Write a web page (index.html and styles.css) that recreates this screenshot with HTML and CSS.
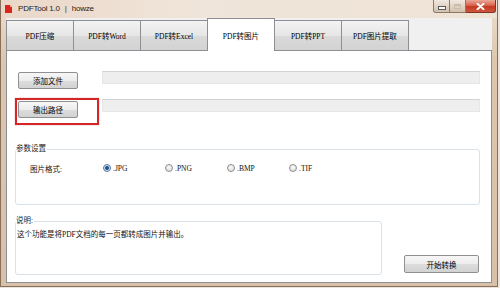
FILE: index.html
```html
<!DOCTYPE html>
<html lang="zh-CN">
<head>
<meta charset="utf-8">
<title>PDFTool 1.0 | howze</title>
<link rel="stylesheet" href="styles.css">
</head>
<body>
<div class="window">
  <div class="titlebar">
    <svg class="app-icon" width="7" height="8" viewBox="0 0 7 8"><path d="M0 0H5L7 2V8H0Z" fill="#d8261c"/><path d="M5 0V2H7Z" fill="#f4b5ab"/></svg>
    <span class="title">PDFTool 1.0<span class="sep">|</span>howze</span>
    <div class="controls">
      <div class="ctl min"><span class="min-bar"></span></div>
      <div class="ctl max"><span class="max-box"></span></div>
      <div class="ctl close"><svg width="9" height="7" viewBox="0 0 9 7"><path d="M1.5 0.8L7.5 6.2M7.5 0.8L1.5 6.2" stroke="#fff" stroke-width="2" stroke-linecap="round"/></svg></div>
    </div>
  </div>
  <div class="client">
    <div class="tabs">
      <div class="tab">PDF压缩</div>
      <div class="tab">PDF转Word</div>
      <div class="tab">PDF转Excel</div>
      <div class="tab active">PDF转图片</div>
      <div class="tab">PDF转PPT</div>
      <div class="tab">PDF图片提取</div>
    </div>
    <div class="page">
      <div class="file-row">
        <button class="btn">添加文件</button>
        <div class="field"></div>
      </div>
      <div class="file-row second">
        <button class="btn">输出路径</button>
        <div class="field"></div>
        <div class="highlight"></div>
      </div>
      <fieldset class="group params">
        <legend>参数设置</legend>
        <div class="param-row">
          <span class="param-label">图片格式:</span>
          <span class="option"><span class="radio checked"></span>.JPG</span>
          <span class="option"><span class="radio"></span>.PNG</span>
          <span class="option"><span class="radio"></span>.BMP</span>
          <span class="option"><span class="radio"></span>.TIF</span>
        </div>
      </fieldset>
      <div class="bottom-row">
        <fieldset class="group desc">
          <legend>说明:</legend>
          <div class="desc-text">这个功能是将PDF文档的每一页都转成图片并输出。</div>
        </fieldset>
        <button class="btn start">开始转换</button>
      </div>
    </div>
  </div>
</div>
</body>
</html>
```
FILE: styles.css
```css
* { box-sizing: border-box; }
html, body { margin: 0; }
body {
  width: 500px;
  height: 288px;
  overflow: hidden;
  background: #ebe4dc;
  font-family: "Liberation Serif", "Noto Sans CJK SC", serif;
  font-size: 7.5px;
  color: #111;
}
.window {
  width: 498px;
  height: 287px;
  border: 1px solid #86705a;
  border-top: none;
  background: linear-gradient(to bottom, #efe4d8 0, #e8d8c6 18px, #dcc6ae 60px, #d8c1a8 100%);
  display: flex;
  flex-direction: column;
  padding-bottom: 3px;
}
.titlebar {
  height: 18px;
  display: flex;
  align-items: flex-start;
  padding-left: 4px;
  background: linear-gradient(to right, #ead7c8 0, #f0e5da 40%, #efe3d6 100%);
}
.app-icon { margin-top: 5px; flex: none; }
.title {
  margin-left: 6px;
  line-height: 18px;
  font-family: "Liberation Sans", "Noto Sans CJK SC", sans-serif;
  font-size: 8px;
  letter-spacing: -0.2px;
  color: #1b1b1b;
}
.sep { margin: 0 5px; color: #333; }
.controls {
  margin-left: auto;
  margin-right: 1px;
  display: flex;
  height: 13px;
}
.ctl {
  height: 13px;
  display: flex;
  align-items: center;
  justify-content: center;
  border: 1px solid #8c7a68;
  border-top: none;
}
.ctl.min {
  width: 17px;
  border-bottom-left-radius: 3px;
  background: linear-gradient(#f1e9e0, #e2d4c5 50%, #d3c1ae);
}
.ctl.max {
  width: 16px;
  border-left: none;
  background: linear-gradient(#f1e9e0, #e2d4c5 50%, #d3c1ae);
}
.ctl.close {
  width: 30px;
  border-left: none;
  border-color: #7d3426;
  border-bottom-right-radius: 3px;
  background: linear-gradient(#eba898, #d9634e 45%, #c4391f 55%, #cf5640);
}
.min-bar {
  width: 6px;
  height: 2px;
  margin-top: 3px;
  background: #fafafa;
  box-shadow: 0 0 0 1px #5a5a5a;
}
.max-box {
  width: 7px;
  height: 5px;
  border: 1px solid #c9baa9;
  border-top-width: 2px;
}
.client {
  flex: 1;
  margin: 0 5px;
  display: flex;
  flex-direction: column;
  background: #f0f0f0;
}
.tabs {
  display: flex;
  align-items: flex-end;
  height: 32px;
}
.tab {
  flex: none;
  width: 68px;
  height: 30px;
  margin-left: -1px;
  border: 1px solid #8d8f95;
  border-bottom: none;
  background: linear-gradient(#f3f3f3, #e6e6e6 50%, #dadada 51%, #d3d3d3);
  display: flex;
  align-items: center;
  justify-content: center;
  white-space: nowrap;
  color: #000;
}
.tab:first-child { margin-left: 0; }
.tab.active {
  height: 33px;
  margin-bottom: -1px;
  background: #fff;
  position: relative;
  z-index: 1;
}
.page {
  flex: 1;
  background: #fff;
  border: 1px solid #8d8f95;
  padding: 20px 11px 0 8px;
}
.file-row {
  display: flex;
  align-items: flex-start;
  height: 18px;
  position: relative;
}
.file-row.second { margin-top: 10px; }
.btn {
  font: inherit;
  color: #000;
  width: 60px;
  height: 17px;
  padding: 0;
  margin: 1px 0 0 3px;
  border: 1px solid #8f9092;
  border-radius: 2px;
  background: linear-gradient(#f7f7f7, #ececec 50%, #dddddd 51%, #d2d2d2);
  flex: none;
}
.file-row.second .btn { margin-top: 2px; }
.field {
  flex: 1;
  height: 13px;
  margin-left: 24px;
  background: #eeeeee;
  border: 1px solid #e6e6e6;
  border-top-color: #d2d2d2;
}
.highlight {
  position: absolute;
  left: 0;
  top: -1px;
  width: 84px;
  height: 27px;
  border: 2px solid #d42626;
  box-shadow: 0 0 1px rgba(200, 30, 30, 0.6);
}
.group {
  margin: 0;
  min-width: 0;
  border: 1px solid #d9e1e7;
  border-radius: 3px;
}
.group legend {
  line-height: 12px;
  height: 12px;
  padding: 0 1px 0 0;
  color: #1e1e1e;
}
.params {
  margin-top: 26px;
  padding: 6px 0 29px 14px;
}
.params legend { margin-left: -14px; }
.param-row {
  display: flex;
  align-items: center;
  height: 14px;
}
.param-label { width: 73px; flex: none; }
.option {
  width: 62px;
  flex: none;
  display: flex;
  align-items: center;
  white-space: nowrap;
}
.radio {
  width: 8px;
  height: 8px;
  margin-right: 2px;
  border-radius: 50%;
  border: 1px solid #8e8e8e;
  background: radial-gradient(circle at 50% 35%, #fbfbfb, #d6d6d6);
  flex: none;
}
.radio.checked {
  border-color: #56769a;
  background: radial-gradient(circle, #1d4b85 0, #2b5c98 1.6px, #cddcee 2.3px, #eef4fb);
}
.bottom-row {
  display: flex;
  align-items: flex-end;
  margin-top: 10px;
}
.desc {
  width: 367px;
  flex: none;
  padding: 2px 0 33px 1px;
}
.desc legend { margin-left: -1px; }
.desc-text { line-height: 12px; white-space: nowrap; }
.btn.start {
  width: 75px;
  height: 18px;
  margin: 0 1px 2px auto;
}
```
